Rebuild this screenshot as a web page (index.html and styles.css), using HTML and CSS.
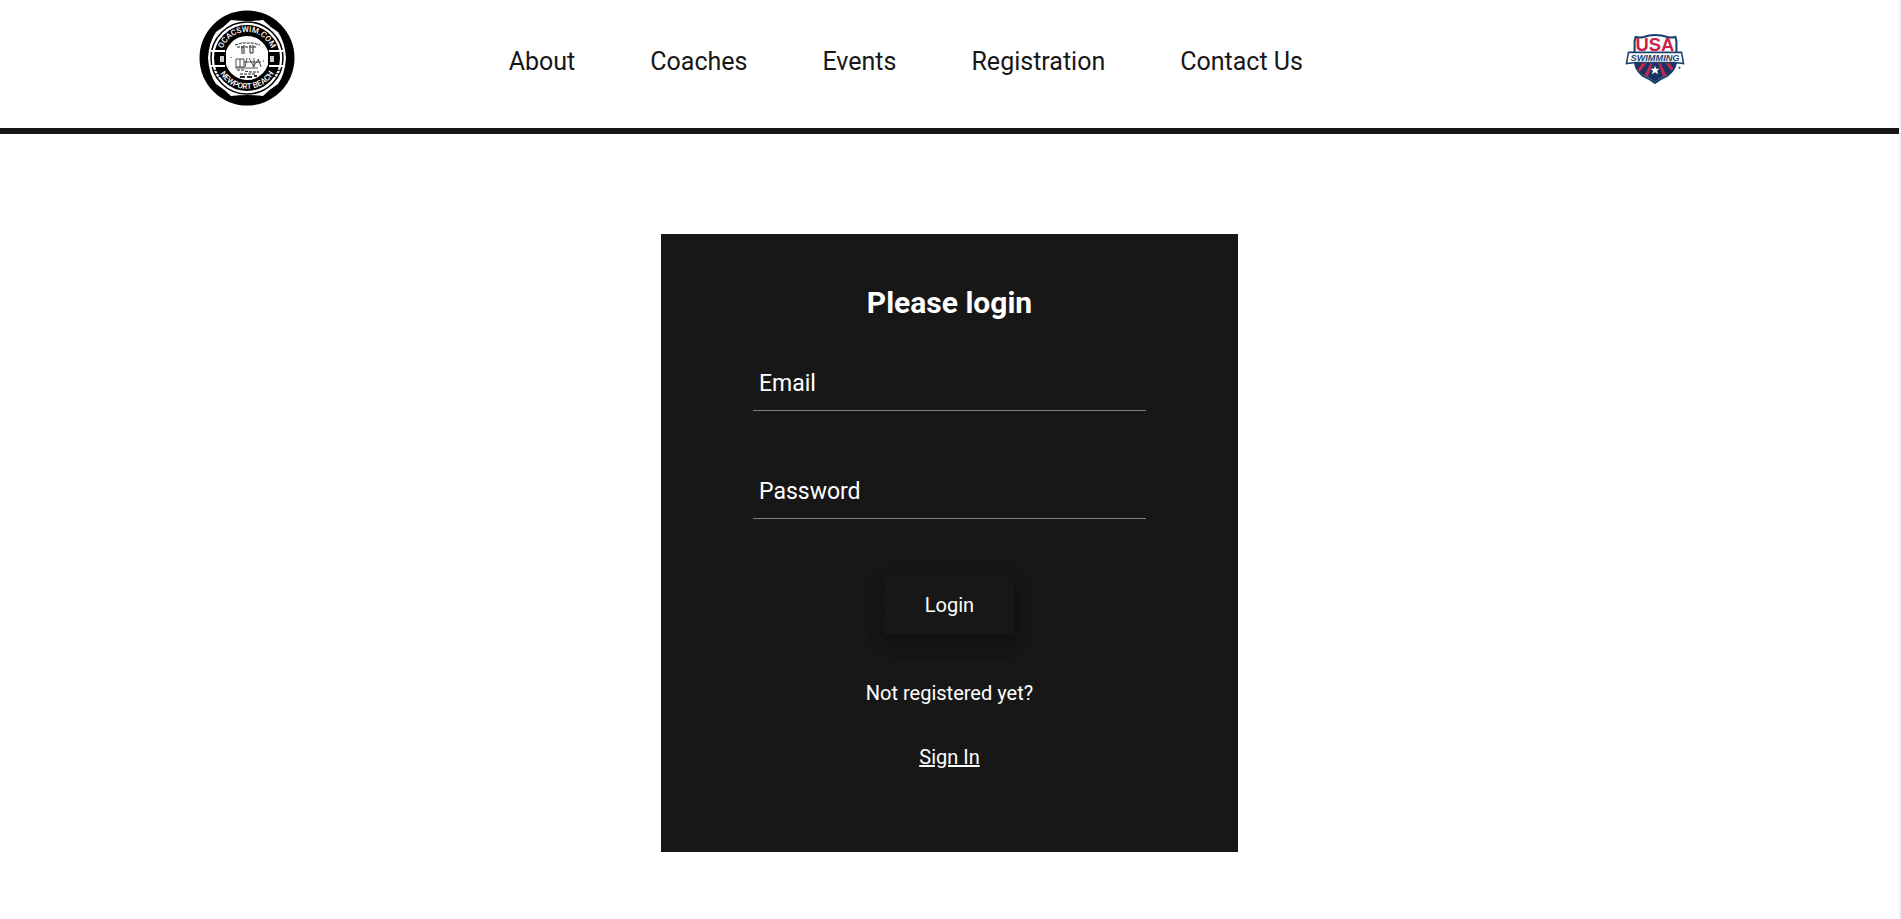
FILE: index.html
```html
<!DOCTYPE html>
<html lang="en">
<head>
<meta charset="utf-8">
<meta name="viewport" content="width=device-width, initial-scale=1">
<title>Login</title>
<link rel="stylesheet" href="styles.css">
</head>
<body>
<header class="header">
  <a class="logo" href="#" aria-label="Home">
    <svg class="club-logo" viewBox="0 0 96 96" aria-hidden="true">
      <defs>
        <path id="arc-top" d="M22 48a26 26 0 0 1 52 0"/>
        <path id="arc-bottom" d="M17 48a31 31 0 0 0 62 0"/>
      </defs>
      <circle cx="48" cy="48" r="47.500"/>
      <path fill="#fff" d="M32 10Q48 12 64 10Q71 17 79 22Q86 32 87 48Q86 64 79 74Q71 79 64 86Q48 84 32 86Q25 79 17 74Q10 64 9 48Q10 32 17 22Q25 17 32 10Z"/>
      <circle cx="48" cy="48" r="36" fill="none" stroke="#000" stroke-width="1.500"/>
      <circle cx="48" cy="48" r="27.500" fill="none" stroke="#000" stroke-width="11"/>
      <path fill="none" stroke="#fff" stroke-width="2" d="M12 41h14M12 56h14M70 41h14M70 56h14"/>
      <path fill="none" stroke="#000" d="M14 60l7 1M16 64l6-1M17 68l7-3M82 60l-7 1M80 64l-6-1M79 68l-7-3"/>
      <path d="M17 42h10v13H17zM69 42h10v13H69z"/>
      <path fill="#ccc" d="M21 46h4v6h-4zM71 46h4v6h-4z"/>
      <text class="ring-text"><textPath href="#arc-top" startOffset="50%">OCACSWIM.COM</textPath></text>
      <text class="ring-text"><textPath href="#arc-bottom" startOffset="50%">NEWPORT BEACH</textPath></text>
      <circle cx="48" cy="48" r="21" fill="#fff"/>
      <g fill="none" stroke="#222" stroke-width="1">
        <path d="M36 35l7-2h11l7 2M38 37h20" stroke-dasharray="3 1"/>
        <path d="M43 36v8M45 35v9M51 35v8h3v-8"/>
        <path d="M37 49h8v8h-8zM41 49v8M48 48l-2 9M50 48l5 9M55 48v9M59 49l3 8M36 58h23M45 52h17M54 57l6-8" stroke-width=".8"/>
        <path d="M38 60h8M46 61l5 1h9M41 64h15M32 47v1M64 51h1" stroke-dasharray="3 1"/>
        <path d="M41 67h5M48 67h5M55 66h3" stroke-width="2"/>
      </g>
    </svg>
  </a>
  <nav class="nav" aria-label="Main">
    <a href="#">About</a>
    <a href="#">Coaches</a>
    <a href="#">Events</a>
    <a href="#">Registration</a>
    <a href="#">Contact Us</a>
  </nav>
  <a class="logo logo-end" href="#" aria-label="USA Swimming">
    <svg class="usa-logo" viewBox="0 0 58 50" aria-hidden="true">
      <path fill="#fff" stroke="#17406d" stroke-width="2" d="M10 3Q14 4 18 3Q23 1 29 1Q36 1 41 3Q45 4 49 3L50 7V22Q51 34 41 41Q34 44 29 48Q24 44 17 41Q8 34 9 22V7Z"/>
      <path fill="#183462" d="M10 28H50Q49 36 41 40Q34 43 29 47Q24 43 17 40Q10 36 10 28Z"/>
      <path fill="#c9254f" d="M17 28h4l-7 9-2-2zM25 28h2l-5 14-3-2zM32 28h2l6 12-3 2zM39 28h4l4 6-2 2z"/>
      <path fill="#fff" d="M29 31l1 3h3.500l-2.500 2 1 3.500-3-2-3 2 1-3.500-2.500-2h3.500z"/>
      <text class="usa-text" x="29" y="17">USA</text>
      <path fill="#fff" stroke="#17406d" stroke-width="1.500" d="M3 18H55L57 29L48 28H10L1 29Z"/>
      <text class="swim-text" x="29" y="26">SWIMMING</text>
      <circle cx="53" cy="33" r="1" fill="#17406d"/>
    </svg>
  </a>
</header>
<main class="main">
  <form class="card">
    <h1 class="title">Please login</h1>
    <input class="field" type="email" placeholder="Email" aria-label="Email">
    <input class="field" type="password" placeholder="Password" aria-label="Password">
    <button class="submit" type="button">Login</button>
    <p class="note">Not registered yet?</p>
    <a class="link" href="#">Sign In</a>
  </form>
</main>
</body>
</html>
```
FILE: styles.css
```css
* {
  box-sizing: border-box;
}

body {
  margin: 0;
  min-height: 100vh;
  border-right: 2px solid #f1f1f1;
  background: #fff;
  color: #171717;
  font-family: Roboto, "Liberation Sans", sans-serif;
}

.header {
  display: grid;
  grid-template-columns: 26% 1fr 26%;
  align-items: center;
  padding: 10px 0 22px;
  border-bottom: 6px solid #171717;
}

.logo {
  display: flex;
  justify-content: center;
}

.logo-end {
  padding: 2px 0 0 6px;
}

.club-logo {
  width: 96px;
  height: 96px;
}

.usa-logo {
  width: 60px;
  height: 51px;
}

.ring-text {
  fill: #fff;
  font-size: 8px;
  font-weight: 500;
  text-anchor: middle;
}

.usa-text {
  fill: #d01f4b;
  font: bold 18px "Liberation Sans", sans-serif;
  text-anchor: middle;
}

.swim-text {
  fill: #17406d;
  font: italic bold 9px "Liberation Sans", sans-serif;
  text-anchor: middle;
}

.nav {
  display: flex;
  gap: 75px;
  padding: 8px 0 0 15px;
  font-size: 25px;
  line-height: 30px;
  white-space: nowrap;
}

.nav a {
  color: inherit;
  text-decoration: none;
}

.main {
  display: flex;
  justify-content: center;
  padding: 100px 20px 60px;
}

.card {
  display: flex;
  flex-direction: column;
  align-items: center;
  width: 577px;
  max-width: 100%;
  padding: 49px 92px 83px;
  background: #171717;
  color: #fff;
  font-size: 20px;
  line-height: 24px;
}

.title {
  margin: 0 0 32px;
  font-size: 30px;
  line-height: 40px;
}

.field {
  width: 100%;
  height: 56px;
  margin-bottom: 52px;
  padding: 2px 6px 0;
  border: 0;
  border-bottom: 1px solid #808080;
  background: transparent;
  color: #fff;
  font: inherit;
  font-size: 23px;
}

.field::placeholder {
  color: #fff;
  opacity: 1;
}

.submit {
  margin-top: 4px;
  padding: 18px 40px;
  border: 0;
  background: #171717;
  box-shadow: 0 8px 16px rgba(0, 0, 0, 0.2), 0 6px 20px rgba(0, 0, 0, 0.19);
  color: #fff;
  font: inherit;
}

.note {
  margin: 46px 0 40px;
}

.link {
  color: #fff;
}
```
